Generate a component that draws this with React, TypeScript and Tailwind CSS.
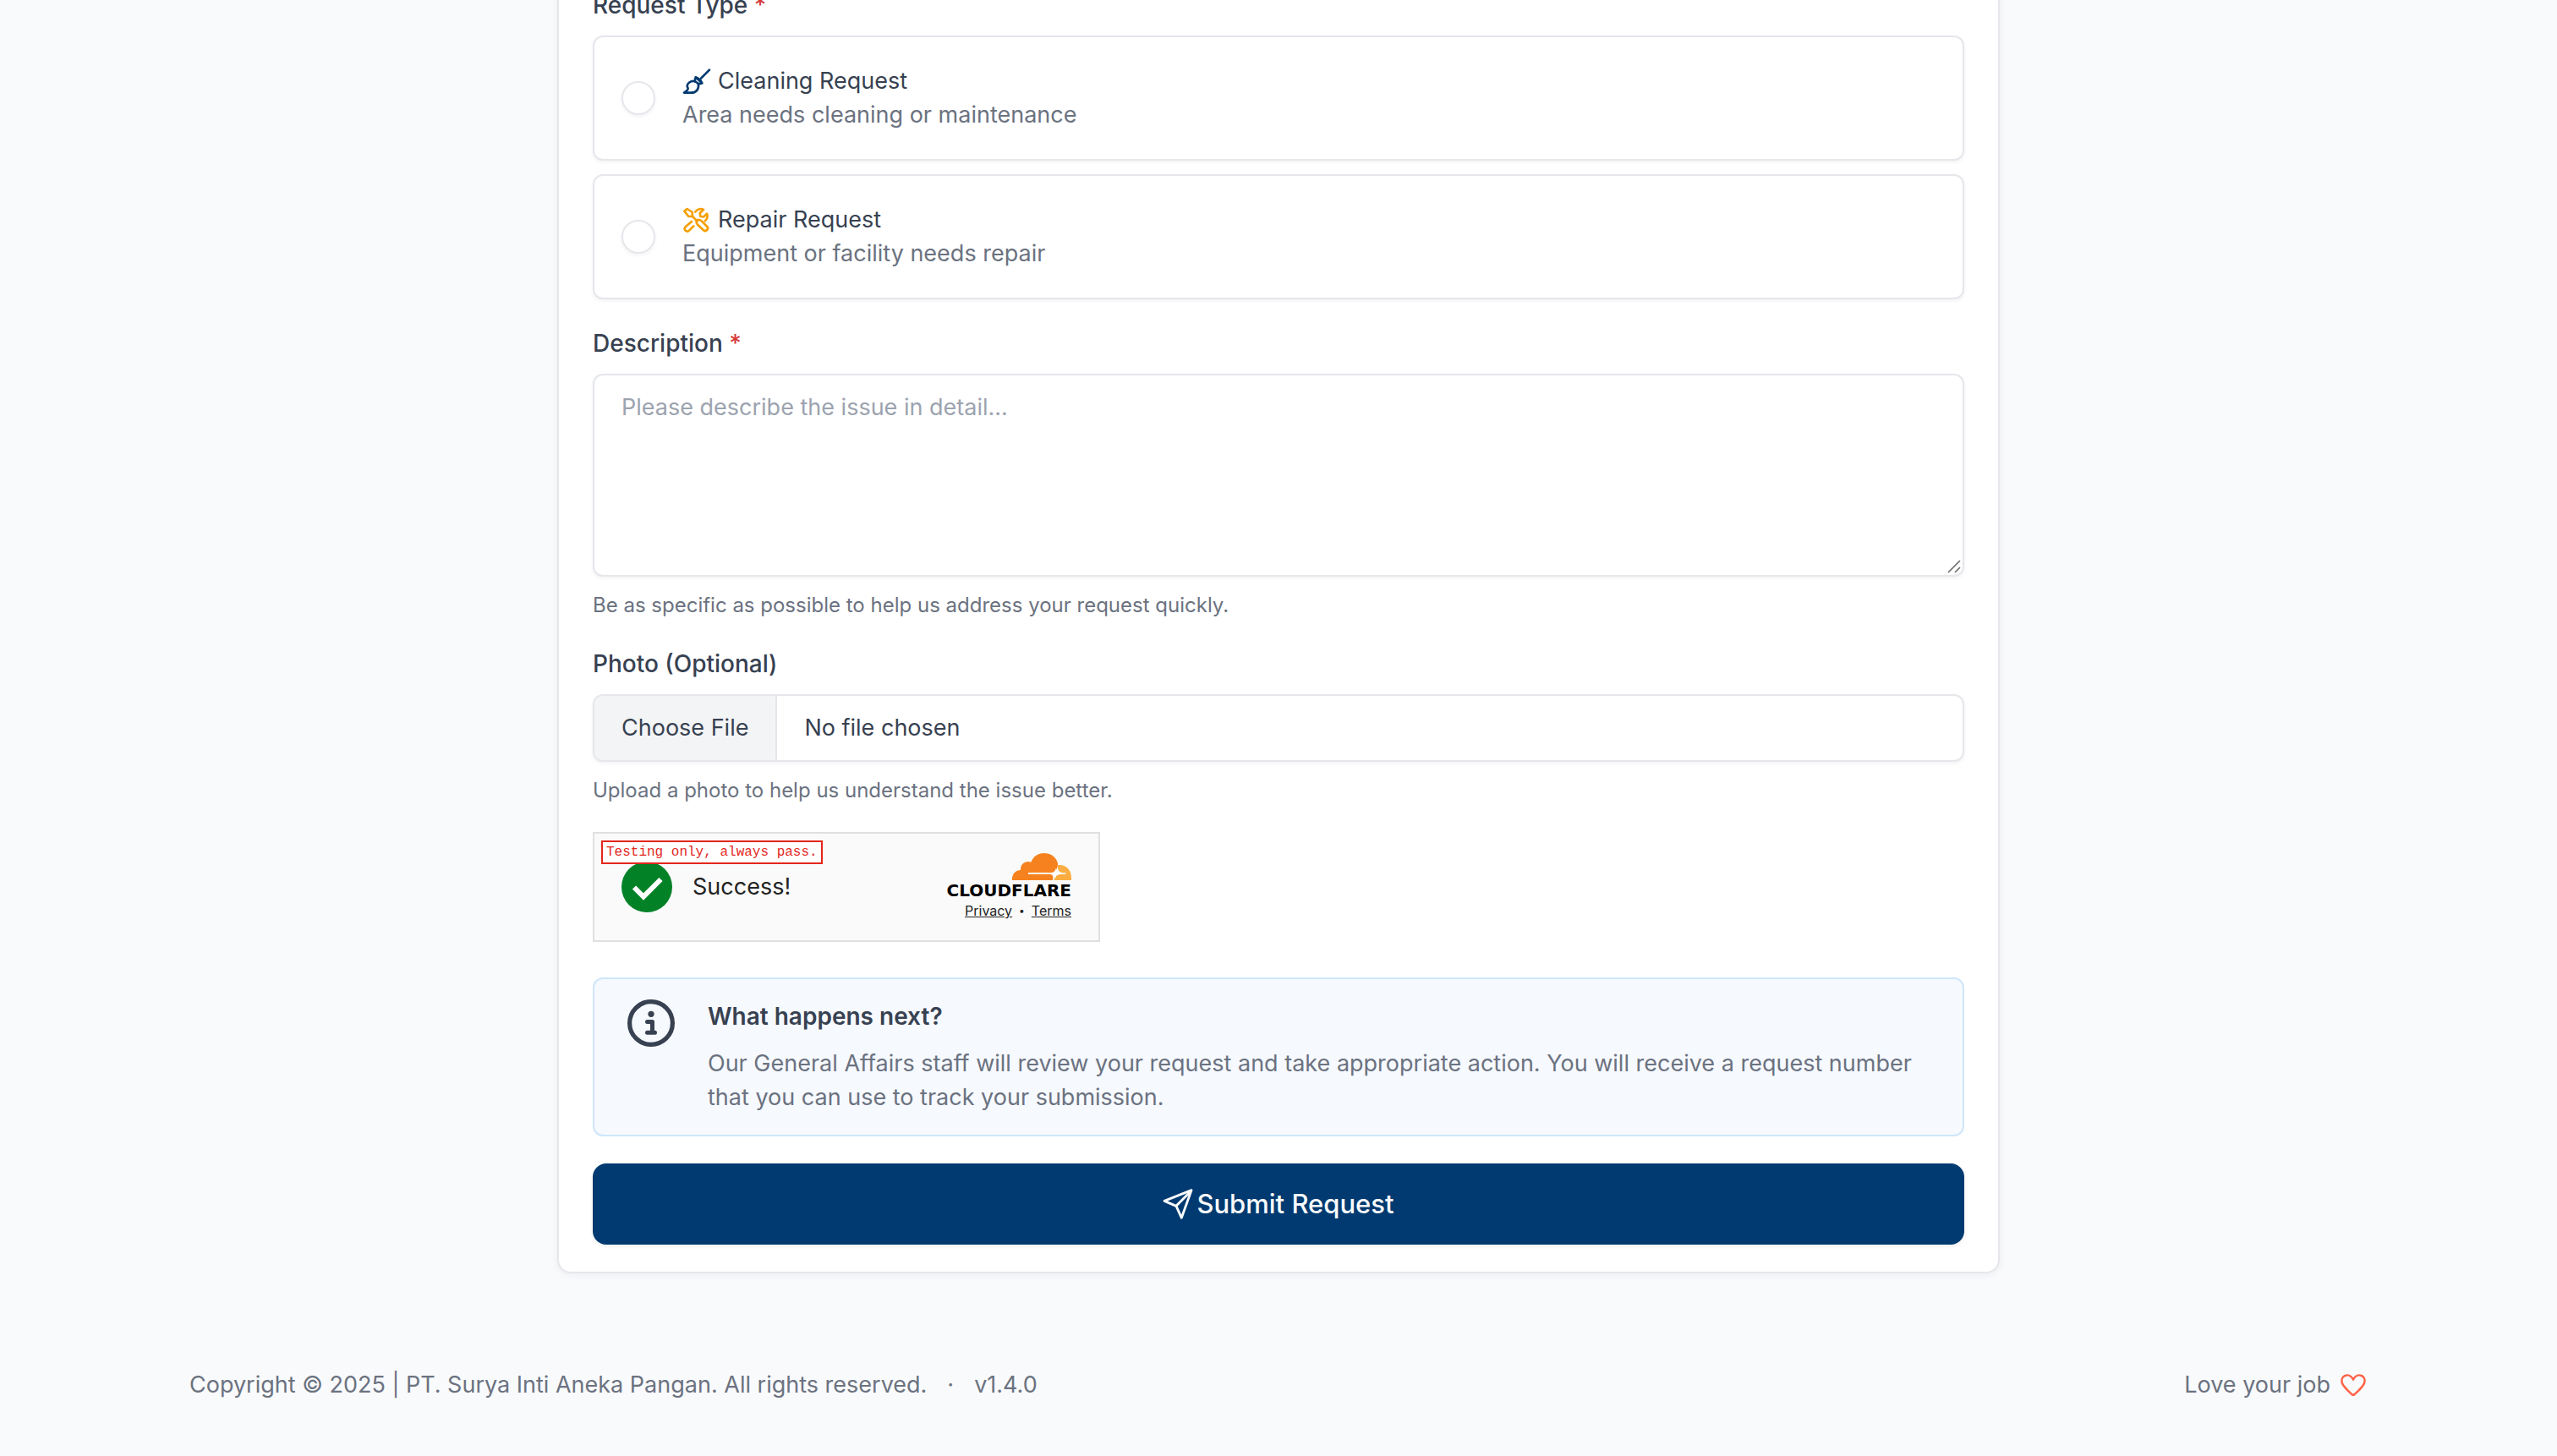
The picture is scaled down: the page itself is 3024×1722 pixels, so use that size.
import React from "react";

function BroomIcon() {
  return (
    <svg viewBox="0 0 102 96" className="h-8 w-[34px] shrink-0" fill="none" stroke="#003a70" strokeWidth="8" strokeLinecap="round" strokeLinejoin="round" aria-hidden="true">
      <path d="M96 8 66 38" />
      <path d="M47 34 70 55 M47 34 44 49 M70 55 56 58 M47 34 56 38 65 46 70 55" />
      <path d="M44 48C28 46 17 56 17 66c0 3 3 4 3 8 0 7-8 9-14 15h25c20 0 28-14 26-32Z" />
    </svg>
  );
}

function ToolsIcon() {
  return (
    <svg viewBox="0 0 102 96" className="h-8 w-[34px] shrink-0" fill="none" stroke="#f59f00" strokeWidth="8" strokeLinecap="round" strokeLinejoin="round" aria-hidden="true">
      <path d="M7 17 17 9l18 12 1 15H22Z" />
      <path d="M36 36 53 53" />
      <path d="M50 52c5-6 13-5 18 0l20 20c7 8-5 20-13 13L54 65c-4-4-5-9-4-13Z" />
      <path d="M46 20c5-9 18-14 29-8L62 24l2 12 12 1L87 26c4 12 0 21-6 26" />
      <path d="M33 54 11 73c-8 9 3 21 13 13l16-16" />
    </svg>
  );
}

function InfoIcon() {
  return (
    <svg viewBox="0 0 56 56" className="h-14 w-14" aria-hidden="true">
      <circle cx="28" cy="28" r="25.4" fill="none" stroke="#374151" strokeWidth="5.2" />
      <circle cx="28" cy="17.3" r="3.6" fill="#374151" />
      <path d="M23.5 26.5h6V39M23.5 39.2h9" fill="none" stroke="#374151" strokeWidth="5" strokeLinecap="round" strokeLinejoin="round" />
    </svg>
  );
}

function SendIcon() {
  return (
    <svg viewBox="0 0 108 108" className="h-9 w-9 shrink-0" fill="none" stroke="currentColor" strokeWidth="8.5" strokeLinecap="round" strokeLinejoin="round" aria-hidden="true">
      <path d="M102 5 6 43l42 18 19 42Z" />
      <path d="M48 61 100 8" />
    </svg>
  );
}

function HeartIcon() {
  return (
    <svg viewBox="0 0 96 78" className="h-[26px] w-8" fill="none" stroke="#ff6347" strokeWidth="7.5" strokeLinejoin="round" aria-hidden="true">
      <path d="M45 20C37 5 25 2 16 6 6 10 2 21 6 33c5 13 23 29 34 39 3 3 7 3 10 0 11-10 29-26 34-39 4-12 0-23-10-27-9-4-21-1-29 14Z" />
    </svg>
  );
}

function CloudIcon() {
  return (
    <svg viewBox="0 0 210 96" className="h-8 w-[70px]" aria-hidden="true">
      <path fill="#f6821f" d="M0 96C-2 76 12 60 30 60 29 38 48 25 67 32 75 11 93 0 114 0c26 0 44 17 48 37 1 17-10 31-22 32H57v6h79c8 1 11 9 8 21Z" />
      <path fill="#fbad41" d="M162 43c26-5 48 16 48 43v10h-61c2-14 10-19 24-21h17v-5h-13c-11-3-17-14-15-27Z" />
      <path fill="#fff" d="M155 54c2 12 5 15 17 18-12 2-16 6-18 17-2-11-6-14-17-17 11-3 15-6 18-18Z" />
    </svg>
  );
}

const options = [
  { value: "cleaning", title: "Cleaning Request", text: "Area needs cleaning or maintenance", Icon: BroomIcon },
  { value: "repair", title: "Repair Request", text: "Equipment or facility needs repair", Icon: ToolsIcon },
];

function RequestTypes() {
  return (
    <fieldset>
      <legend className="mb-4 text-[28px] font-medium">
        Request Type <span className="text-[#d63939]">*</span>
      </legend>
      <div className="flex flex-col gap-4">
        {options.map(({ value, title, text, Icon }) => (
          <label key={value} className="flex items-center gap-8 rounded-xl border-2 border-[#e5e7eb] bg-white p-8 shadow-[0_2px_4px_rgba(31,41,55,0.06)]">
            <input type="radio" name="type" value={value} className="h-10 w-10 shrink-0 appearance-none rounded-full border-2 border-[#e5e7eb] bg-white shadow-[0_2px_4px_rgba(31,41,55,0.06)] checked:border-[12px] checked:border-[#003a70]" />
            <span>
              <span className="flex items-center gap-2">
                <Icon />
                {title}
              </span>
              <span className="block text-[#6b7280]">{text}</span>
            </span>
          </label>
        ))}
      </div>
    </fieldset>
  );
}

function Turnstile() {
  return (
    <section className="relative mb-[10px] flex h-[130px] w-[600px] items-center justify-between border-2 border-[#e0e0e0] bg-[#fafafa] px-8 text-[#232323]">
      <div className="flex items-center gap-6">
        <svg viewBox="0 0 60 60" className="h-[60px] w-[60px]" aria-hidden="true">
          <circle cx="30" cy="30" r="30" fill="#038127" />
          <path d="M15 30.5 26 41.500 46.500 21" fill="none" stroke="#fff" strokeWidth="6" />
        </svg>
        <span>Success!</span>
      </div>
      <div className="flex flex-col items-end">
        <CloudIcon />
        <span className="font-['DejaVu_Sans',sans-serif] text-[20px] leading-6 font-bold text-black">CLOUDFLARE</span>
        <div className="flex gap-2 text-[16px] leading-6">
          <a href="#privacy" className="underline">Privacy</a>
          <span className="text-[12px]">•</span>
          <a href="#terms" className="underline">Terms</a>
        </div>
      </div>
      <p className="absolute top-2 left-2 border-2 border-[#e4261c] bg-white/90 px-1 font-['Liberation_Mono',monospace] text-[16px] leading-6 text-[#e4261c]">
        Testing only, always pass.
      </p>
    </section>
  );
}

export default function App() {
  return (
    <div className="min-h-screen overflow-hidden bg-[#f9fafc] font-[Inter,sans-serif] text-[27px] leading-10 text-[#374151]">
      <main className="mx-auto -mt-[14px] max-w-[1706px]">
        <form className="flex flex-col gap-8 rounded-b-2xl border-2 border-t-0 border-[#e5e7eb] bg-white px-10 pb-8 shadow-[0_2px_8px_rgba(31,41,55,0.06)]">
          <RequestTypes />

          <div>
            <label htmlFor="description" className="mb-4 block text-[28px] font-medium">
              Description <span className="text-[#d63939]">*</span>
            </label>
            <div className="relative">
              <textarea id="description" placeholder="Please describe the issue in detail..." className="block h-60 w-full resize-none rounded-xl border-2 border-[#e5e7eb] bg-white px-8 py-[18px] shadow-[0_2px_4px_rgba(31,41,55,0.06)] placeholder:text-[#9ca3af]" />
              <svg viewBox="0 0 16 16" className="pointer-events-none absolute right-1 bottom-1 h-4 w-4" fill="none" stroke="#6b6b6b" strokeWidth="1.6" aria-hidden="true">
                <path d="M1 15 15 1M9 15l6-6" />
              </svg>
            </div>
            <p className="mt-4 text-[24px] leading-[35px] text-[#6b7280]">
              Be as specific as possible to help us address your request quickly.
            </p>
          </div>

          <div>
            <label htmlFor="photo" className="mb-4 block text-[28px] font-medium">Photo (Optional)</label>
            <input id="photo" type="file" className="block h-20 w-full rounded-xl border-2 border-[#e5e7eb] bg-white shadow-[0_2px_4px_rgba(31,41,55,0.06)] file:mr-8 file:h-[76px] file:border-0 file:border-r-2 file:border-solid file:border-[#e5e7eb] file:bg-[#f3f4f6] file:px-8 file:text-[#374151]" />
            <p className="mt-4 text-[24px] leading-[35px] text-[#6b7280]">
              Upload a photo to help us understand the issue better.
            </p>
          </div>

          <Turnstile />

          <section className="flex gap-8 rounded-xl border-2 border-[#cfe6f9] bg-[#f6f9fe] px-8 py-6">
            <div className="flex w-[70px] shrink-0 justify-center">
              <InfoIcon />
            </div>
            <div>
              <h2 className="mb-4 text-[28px] font-semibold">What happens next?</h2>
              <p className="text-[#6b7280]">
                Our General Affairs staff will review your request and take appropriate action. You will receive a request number that you can use to track your submission.
              </p>
            </div>
          </section>

          <button type="submit" className="flex h-24 items-center justify-center gap-1 rounded-2xl bg-[#003a70] text-[31px] font-medium text-[#f9fafb] shadow-[0_2px_4px_rgba(31,41,55,0.08)]">
            <SendIcon />
            Submit Request
          </button>
        </form>
      </main>

      <footer className="mx-auto flex max-w-[2640px] items-center justify-between px-8 pt-28 pb-16 text-[#6b7280]">
        <div className="flex gap-6">
          <span>Copyright © 2025 | PT. Surya Inti Aneka Pangan. All rights reserved.</span>
          <span>·</span>
          <span>v1.4.0</span>
        </div>
        <div className="flex items-center gap-3">
          Love your job
          <HeartIcon />
        </div>
      </footer>
    </div>
  );
}
